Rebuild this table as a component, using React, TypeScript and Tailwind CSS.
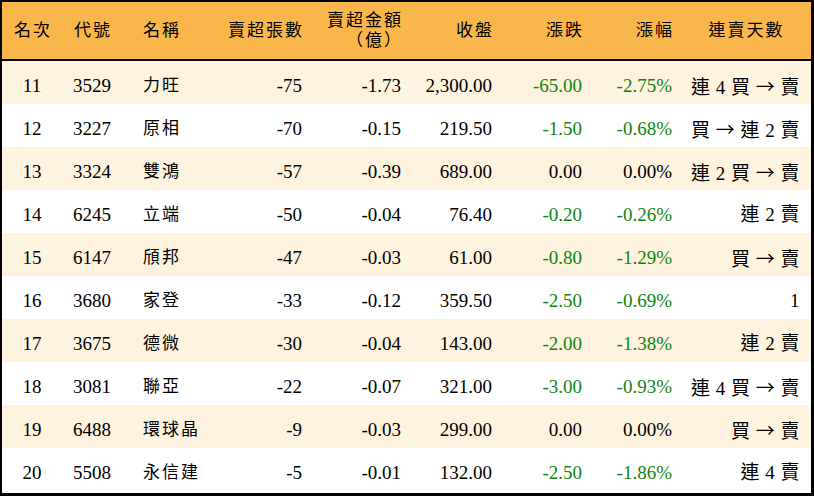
import React from "react";

type Row = {
  rank: number;
  code: string;
  name: string;
  lots: string;
  amount: string;
  close: string;
  change: string;
  pct: string;
  streak: string;
};

const rows: Row[] = [
  { rank: 11, code: "3529", name: "力旺", lots: "-75", amount: "-1.73", close: "2,300.00", change: "-65.00", pct: "-2.75%", streak: "連 4 買 → 賣" },
  { rank: 12, code: "3227", name: "原相", lots: "-70", amount: "-0.15", close: "219.50", change: "-1.50", pct: "-0.68%", streak: "買 → 連 2 賣" },
  { rank: 13, code: "3324", name: "雙鴻", lots: "-57", amount: "-0.39", close: "689.00", change: "0.00", pct: "0.00%", streak: "連 2 買 → 賣" },
  { rank: 14, code: "6245", name: "立端", lots: "-50", amount: "-0.04", close: "76.40", change: "-0.20", pct: "-0.26%", streak: "連 2 賣" },
  { rank: 15, code: "6147", name: "頎邦", lots: "-47", amount: "-0.03", close: "61.00", change: "-0.80", pct: "-1.29%", streak: "買 → 賣" },
  { rank: 16, code: "3680", name: "家登", lots: "-33", amount: "-0.12", close: "359.50", change: "-2.50", pct: "-0.69%", streak: "1" },
  { rank: 17, code: "3675", name: "德微", lots: "-30", amount: "-0.04", close: "143.00", change: "-2.00", pct: "-1.38%", streak: "連 2 賣" },
  { rank: 18, code: "3081", name: "聯亞", lots: "-22", amount: "-0.07", close: "321.00", change: "-3.00", pct: "-0.93%", streak: "連 4 買 → 賣" },
  { rank: 19, code: "6488", name: "環球晶", lots: "-9", amount: "-0.03", close: "299.00", change: "0.00", pct: "0.00%", streak: "買 → 賣" },
  { rank: 20, code: "5508", name: "永信建", lots: "-5", amount: "-0.01", close: "132.00", change: "-2.50", pct: "-1.86%", streak: "連 4 賣" },
];

const cols = "grid grid-cols-[60px_60px_90px_100px_99px_91px_90px_90px_129px]";

function tone(v: string) {
  return v.startsWith("-") ? "text-[#0f850f]" : "text-black";
}

// arrow is drawn in the CJK face so it comes out long like the original
function Streak({ text }: { text: string }) {
  const parts = text.split("→");
  return (
    <>
      {parts.map((p, i) => (
        <React.Fragment key={i}>
          {i > 0 && <span style={{ fontFamily: '"Noto Sans CJK TC", sans-serif' }}>→</span>}
          {p}
        </React.Fragment>
      ))}
    </>
  );
}

export default function App() {
  return (
    <div
      className="w-[814px] h-[496px] bg-white border-black border-t-2 border-l-2 border-r-[3px] border-b-[3px] overflow-hidden text-black"
      style={{ fontFamily: '"Liberation Serif", "Noto Sans CJK TC", serif' }}
    >
      <div className={`${cols} h-[59px] bg-[#f9b64b] border-b-2 border-black text-[17px] tracking-[2px] items-center`}>
        <div className="text-center pl-[2px]">名次</div>
        <div className="text-center pl-[2px]">代號</div>
        <div className="pl-[21px]">名稱</div>
        <div className="text-right pr-[8px]">賣超張數</div>
        <div className="text-right pr-[8px] leading-[20px]">
          <div>賣超金額</div>
          <div>（億）</div>
        </div>
        <div className="text-right pr-[8px]">收盤</div>
        <div className="text-right pr-[8px]">漲跌</div>
        <div className="text-right pr-[8px]">漲幅</div>
        <div className="text-center">連賣天數</div>
      </div>
      {rows.map((r, i) => (
        <div
          key={r.rank}
          className={`${cols} h-[43px] leading-[36px] pt-[7px] text-[19px] ${i % 2 === 0 ? "bg-[#fef3df]" : "bg-white"}`}
        >
          <div className="text-center h-[36px]">{r.rank}</div>
          <div className="text-center h-[36px]">{r.code}</div>
          <div className="pl-[21px] text-[17px] tracking-[2px] h-[36px]">{r.name}</div>
          <div className="text-right pr-[10px] h-[36px]">{r.lots}</div>
          <div className="text-right pr-[10px] h-[36px]">{r.amount}</div>
          <div className="text-right pr-[10px] h-[36px]">{r.close}</div>
          <div className={`text-right pr-[10px] h-[36px] ${tone(r.change)}`}>{r.change}</div>
          <div className={`text-right pr-[10px] h-[36px] ${tone(r.pct)}`}>{r.pct}</div>
          <div className="text-right pr-[11px] whitespace-nowrap h-[36px] tracking-[0.5px]">
            <Streak text={r.streak} />
          </div>
        </div>
      ))}
    </div>
  );
}
